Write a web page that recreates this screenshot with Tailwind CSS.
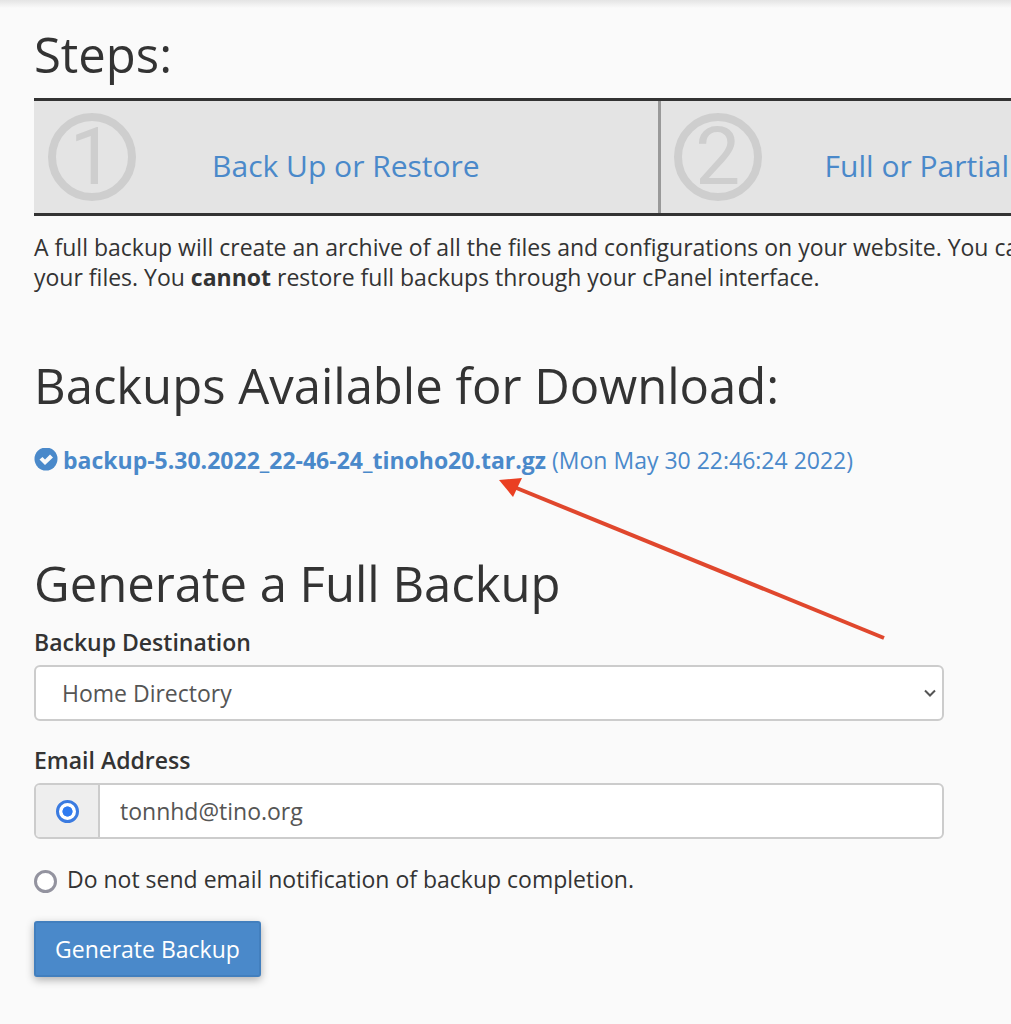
<!DOCTYPE html>
<html lang="en">
<head>
<meta charset="utf-8">
<meta name="viewport" content="width=device-width, initial-scale=1">
<title>Full Backup</title>
<script src="https://cdn.jsdelivr.net/npm/@tailwindcss/browser@4"></script>
</head>
<body class="min-h-screen overflow-x-hidden bg-[#fafafa] font-['Open_Sans',sans-serif] text-[23px] leading-[30px] text-[#333]">
<div class="h-2 bg-linear-to-b from-[#e4e4e4] to-[#fafafa]"></div>
<main class="overflow-hidden pt-4 pb-10 pl-[34px]">
  <h1 class="text-[49px] leading-[60px]">Steps:</h1>

  <ol class="mt-[14px] flex h-[118px] border-y-3 border-[#333] bg-[#e4e4e4]">
    <li class="grid w-[62vw] shrink-0 border-r-3 border-[#999]">
      <span class="col-start-1 row-start-1 mt-[12px] ml-[14px] flex size-[88px] items-center justify-center rounded-full border-8 border-[#cecece] font-[Roboto,sans-serif] text-[80px] leading-[72px] text-[#cecece]">1</span>
      <a href="#" class="col-start-1 row-start-1 self-center justify-self-center pt-[18px] text-[30px] leading-[40px] text-[#4a89ca]">Back Up or Restore</a>
    </li>
    <li class="grid flex-1">
      <span class="col-start-1 row-start-1 mt-[12px] ml-[13px] flex size-[88px] items-center justify-center rounded-full border-8 border-[#cecece] font-[Roboto,sans-serif] text-[80px] leading-[72px] text-[#cecece]">2</span>
      <a href="#" class="col-start-1 row-start-1 self-center justify-self-end pt-[18px] pr-[2px] text-[30px] leading-[40px] whitespace-nowrap text-[#4a89ca]">Full or Partial</a>
    </li>
  </ol>

  <p class="mt-[16px] whitespace-nowrap">A full backup will create an archive of all the files and configurations on your website. You ca<br>your files. You <strong class="font-bold">cannot</strong> restore full backups through your cPanel interface.</p>

  <h2 class="mt-[63px] text-[49px] leading-[60px]">Backups Available for Download:</h2>

  <div class="relative mt-[30px]">
    <a href="#" class="flex items-center gap-[5px] whitespace-nowrap text-[#4a89ca]">
      <svg class="size-6 shrink-0" viewBox="0 0 24 24" aria-hidden="true"><circle cx="12" cy="11" r="11.5" fill="currentColor"/><path d="M5.500 11.500 8.500 9l2.500 2.500L16 6.500 19 9.500l-8 7.500z" fill="#fafafa"/></svg>
      <span><strong class="font-bold">backup-5.30.2022_22-46-24_tinoho20.tar.gz</strong> (Mon May 30 22:46:24 2022)</span>
    </a>
    <svg class="pointer-events-none absolute top-[32px] left-[464px] h-[164px] w-[390px]" viewBox="0 0 390 164" aria-hidden="true"><path d="M16 10 386 161" stroke="#e0472d" stroke-width="4" fill="none"/><path d="M1 3 24 1 15 20z" fill="#ea3f22"/></svg>
  </div>

  <h2 class="mt-[78px] text-[49px] leading-[60px]">Generate a Full Backup</h2>

  <form class="mt-[14px] pr-[67px]">
    <label for="dest" class="block font-semibold">Backup Destination</label>
    <div class="mt-2 grid">
      <select id="dest" class="col-start-1 row-start-1 h-14 w-full appearance-none rounded-md border-2 border-[#ccc] bg-white pl-[26px] text-[#555]"><option>Home Directory</option></select>
      <svg class="pointer-events-none col-start-1 row-start-1 mr-2 h-3 w-3 self-center justify-self-end" viewBox="0 0 12 12" fill="none" stroke="#555" stroke-width="2" aria-hidden="true"><path d="M1 3.500 6 8.500l5-5"/></svg>
    </div>

    <label for="email" class="mt-6 block font-semibold">Email Address</label>
    <div class="mt-2 flex h-14 overflow-hidden rounded-md border-2 border-[#ccc] bg-white">
      <span class="flex w-16 shrink-0 items-center justify-center border-r-2 border-[#ccc] bg-[#eee]">
        <input type="radio" name="notify" checked aria-label="Send email notification" class="size-[23px] appearance-none rounded-full border-3 border-[#3b7be0] bg-white bg-radial from-[#2f7bf0] from-40% to-white to-45%">
      </span>
      <input id="email" type="email" value="tonnhd@tino.org" class="min-w-0 flex-1 pl-5 text-[#555] outline-none">
    </div>

    <div class="mt-[25px] flex items-center gap-[10px]">
      <input id="none" type="radio" name="notify" class="mt-1 size-[23px] shrink-0 appearance-none rounded-full border-3 border-[#93939f] bg-white">
      <label for="none">Do not send email notification of backup completion.</label>
    </div>

    <button type="button" class="mt-[27px] h-14 rounded-[3px] border-2 border-[#427fbe] bg-[#4a89ca] px-[19px] text-white shadow-[0_3px_8px_rgba(0,0,0,0.3)]">Generate Backup</button>
  </form>
</main>
</body>
</html>
